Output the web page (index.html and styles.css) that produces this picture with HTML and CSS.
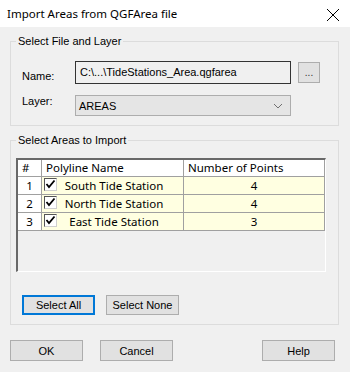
FILE: index.html
```html
<!DOCTYPE html>
<html lang="en">
<head>
  <meta charset="UTF-8">
  <title>Import Areas from QGFArea file</title>
  <link rel="stylesheet" href="styles.css">
</head>
<body>
  <!-- Title bar -->
  <div class="titlebar">
    <span class="titlebar-text">Import Areas from QGFArea file</span>
    <svg class="titlebar-close" width="14" height="14" viewBox="0 0 14 14">
      <path d="M1 1 L13 13 M13 1 L1 13" stroke="#000" stroke-width="1" fill="none"/>
    </svg>
  </div>

  <div class="content">
    <!-- File and layer -->
    <fieldset class="group group-file">
      <legend>Select File and Layer</legend>
      <div class="field-row">
        <label class="field-label label-name">Name:</label>
        <div class="textbox">C:\...\TideStations_Area.qgfarea</div>
        <button class="btn btn-browse">...</button>
      </div>
      <div class="field-row">
        <label class="field-label">Layer:</label>
        <div class="combo">
          <span>AREAS</span>
          <svg width="10" height="6" viewBox="0 0 10 6">
            <path d="M1 1 L5 5 L9 1" stroke="#707070" stroke-width="1" fill="none"/>
          </svg>
        </div>
      </div>
    </fieldset>

    <!-- Areas grid -->
    <fieldset class="group group-areas">
      <legend>Select Areas to Import</legend>
      <div class="grid">
        <div class="grid-head">
          <div class="cell cell-num head-left">#</div>
          <div class="cell head-left">Polyline Name</div>
          <div class="cell head-left">Number of Points</div>
        </div>
        <div class="grid-row">
          <div class="cell cell-num">1</div>
          <div class="cell cell-name"><span class="check"><svg width="11" height="11" viewBox="0 0 11 11"><polyline points="1.5,5 4,8 9.5,1.5" stroke="#000" stroke-width="1.8" fill="none"/></svg></span><span class="name-text">South Tide Station</span></div>
          <div class="cell cell-points">4</div>
        </div>
        <div class="grid-row">
          <div class="cell cell-num">2</div>
          <div class="cell cell-name"><span class="check"><svg width="11" height="11" viewBox="0 0 11 11"><polyline points="1.5,5 4,8 9.5,1.5" stroke="#000" stroke-width="1.8" fill="none"/></svg></span><span class="name-text">North Tide Station</span></div>
          <div class="cell cell-points">4</div>
        </div>
        <div class="grid-row">
          <div class="cell cell-num">3</div>
          <div class="cell cell-name"><span class="check"><svg width="11" height="11" viewBox="0 0 11 11"><polyline points="1.5,5 4,8 9.5,1.5" stroke="#000" stroke-width="1.8" fill="none"/></svg></span><span class="name-text">East Tide Station</span></div>
          <div class="cell cell-points">3</div>
        </div>
      </div>
      <div class="select-buttons">
        <button class="btn btn-default">Select All</button>
        <button class="btn">Select None</button>
      </div>
    </fieldset>

    <!-- Dialog buttons -->
    <div class="dialog-buttons">
      <button class="btn btn-dialog">OK</button>
      <button class="btn btn-dialog">Cancel</button>
      <button class="btn btn-dialog btn-help">Help</button>
    </div>
  </div>
</body>
</html>
```

FILE: styles.css
```css
body {
  margin: 0;
  width: 350px;
  height: 372px;
  background-color: #f0f0f0;
  font-family: "Liberation Sans", Arial, sans-serif;
  font-size: 11px;
  color: #000;
  overflow: hidden;
}

/* Title bar */
.titlebar {
  height: 27px;
  background-color: #fff;
  display: flex;
  align-items: center;
  justify-content: space-between;
  padding: 0 10px 0 7px;
}
.titlebar-text {
  font-family: "Noto Sans", sans-serif;
  font-size: 11.5px;
}
.titlebar-close {
  margin-top: 2px;
}

.content {
  padding: 0 11px 0 10px;
}

/* Group boxes */
.group {
  margin: 8px 0 0 0;
  border: 1px solid #dcdcdc;
  padding: 0 11px;
  min-width: 0;
}
.group legend {
  margin-left: -6px;
  padding: 0 2px;
  line-height: 13px;
}
.group-file {
  padding-top: 13px;
  padding-bottom: 9px;
}
.group-areas {
  padding: 11px 0 9px 5px;
}
.group-areas legend {
  margin-left: 0;
}

/* File / layer rows */
.field-row {
  display: flex;
  align-items: flex-start;
}
.field-row + .field-row {
  margin-top: 11px;
}
.field-label {
  width: 53px;
  line-height: 13px;
  margin-top: 0;
}
.label-name {
  margin-top: 9px;
}
.textbox {
  box-sizing: border-box;
  width: 216px;
  height: 23px;
  border: 1px solid #333;
  padding: 3px 0 0 4px;
  line-height: 14px;
}
.combo {
  box-sizing: border-box;
  width: 216px;
  height: 21px;
  border: 1px solid #adadad;
  background-color: #e5e5e5;
  display: flex;
  align-items: center;
  justify-content: space-between;
  padding: 0 7px 0 3px;
}

/* Buttons */
.btn {
  box-sizing: border-box;
  font-family: "Liberation Sans", Arial, sans-serif;
  font-size: 11px;
  color: #000;
  background-color: #e1e1e1;
  border: 1px solid #adadad;
  padding: 0;
  width: 73px;
  height: 20px;
}
.btn-browse {
  width: 22px;
  height: 21px;
  margin: 1px 0 0 7px;
  font-size: 10px;
  color: #333;
}
.btn-default {
  border: 2px solid #0078d7;
}

/* Grid */
.grid {
  box-sizing: border-box;
  width: 310px;
  height: 114px;
  border-style: solid;
  border-width: 2px 1px 1px 2px;
  border-color: #696969 #fff #fff #696969;
  font-family: "Noto Sans", sans-serif;
  font-size: 11.5px;
}
.grid-head,
.grid-row {
  display: grid;
  grid-template-columns: 24px 142px 141px;
}
.grid-head {
  height: 17px;
  background-color: #fff;
}
.grid-row {
  height: 18px;
  background-color: #ffffe1;
}
.cell {
  box-sizing: border-box;
  border-right: 1px solid #a0a0a0;
  border-bottom: 1px solid #a0a0a0;
  text-align: center;
  line-height: 17px;
  white-space: nowrap;
  overflow: hidden;
}
.grid-head .cell {
  line-height: 16px;
}
.head-left {
  text-align: left;
  padding-left: 4px;
}
.grid-row .cell-num {
  background-color: #fff;
}
.cell-name {
  display: flex;
  align-items: flex-start;
}
.check {
  box-sizing: border-box;
  width: 13px;
  height: 13px;
  margin: 1px 0 0 2px;
  background-color: #fff;
  border: 1px solid #555;
  border-right-color: #cfcfcf;
  border-bottom-color: #cfcfcf;
  display: flex;
  align-items: center;
  justify-content: center;
}
.name-text {
  flex: 1;
  text-align: center;
  padding-right: 12px;
}

.select-buttons {
  display: flex;
  gap: 11px;
  margin: 23px 0 0 6px;
}

/* Bottom buttons */
.dialog-buttons {
  display: flex;
  gap: 17px;
  margin-top: 15px;
  padding-right: 4px;
}
.btn-dialog {
  height: 21px;
}
.btn-help {
  margin-left: auto;
}
```
